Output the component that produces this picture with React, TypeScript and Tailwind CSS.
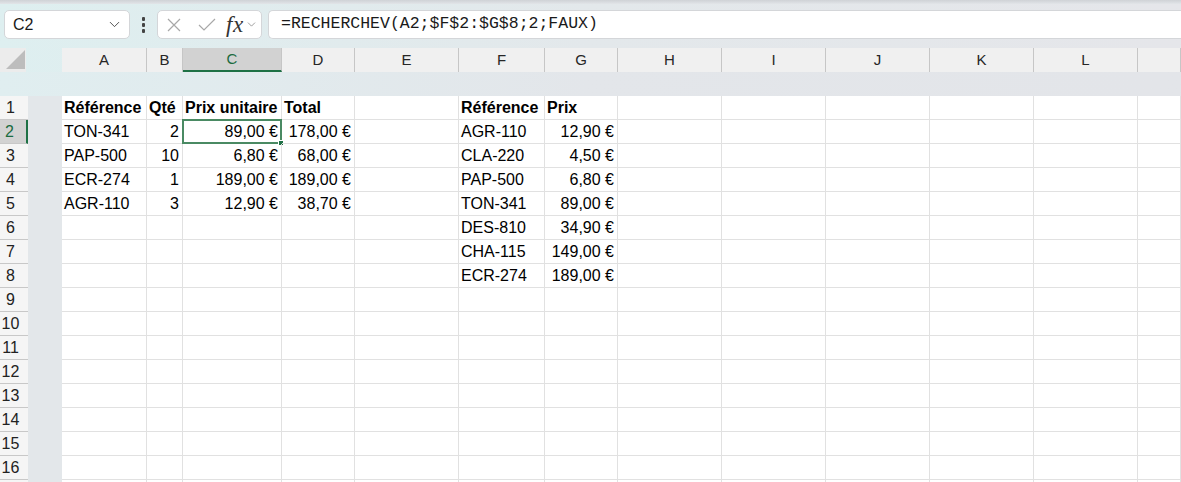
import { ChevronDown } from "lucide-react";

const cols = ["A", "B", "C", "D", "E", "F", "G", "H", "I", "J", "K", "L", ""];
const widths = [85, 36, 99, 73, 104, 86, 73, 104, 104, 104, 104, 104, 43];

type Cell = { t: string; b?: boolean; r?: boolean };

const e = (v: string): Cell => ({ t: `${v}\u00a0€`, r: true });
const n = (v: string): Cell => ({ t: v, r: true });
const s = (v: string): Cell => ({ t: v });
const h = (v: string): Cell => ({ t: v, b: true });

const data: Record<number, Record<number, Cell>> = {
    1: { 0: h("Référence"), 1: h("Qté"), 2: h("Prix unitaire"), 3: h("Total"), 5: h("Référence"), 6: h("Prix") },
    2: { 0: s("TON-341"), 1: n("2"), 2: e("89,00"), 3: e("178,00"), 5: s("AGR-110"), 6: e("12,90") },
    3: { 0: s("PAP-500"), 1: n("10"), 2: e("6,80"), 3: e("68,00"), 5: s("CLA-220"), 6: e("4,50") },
    4: { 0: s("ECR-274"), 1: n("1"), 2: e("189,00"), 3: e("189,00"), 5: s("PAP-500"), 6: e("6,80") },
    5: { 0: s("AGR-110"), 1: n("3"), 2: e("12,90"), 3: e("38,70"), 5: s("TON-341"), 6: e("89,00") },
    6: { 5: s("DES-810"), 6: e("34,90") },
    7: { 5: s("CHA-115"), 6: e("149,00") },
    8: { 5: s("ECR-274"), 6: e("189,00") },
};

const rows = Array.from({ length: 17 }, (_, i) => i + 1);

export default function App() {
    return (
        <div className="w-[1181px] h-[482px] overflow-hidden bg-gradient-to-r from-[#deeff0] via-[#e3e8eb] to-[#e5e6ea] font-['Liberation_Sans',Arial,sans-serif] text-black">
            <div className="h-[4px] bg-gradient-to-b from-[#cfd2d6] to-[#e2e5e8]" />

            {/* formula bar */}
            <div className="flex items-center mt-[6px] h-[29px]">
                <div className="ml-[4px] w-[126px] h-[29px] bg-white border border-[#d4d6d9] rounded-[5px] flex items-center justify-between pl-[8px] pr-[6px]">
                    <span className="text-[16px] text-[#1a1a1a]">C2</span>
                    <ChevronDown size={17} strokeWidth={1.3} className="text-[#444]" />
                </div>
                <div className="w-[27px] flex flex-col items-center gap-[2px]">
                    <span className="w-[3px] h-[4px] rounded-[1px] bg-[#444]" />
                    <span className="w-[3px] h-[4px] rounded-[1px] bg-[#444]" />
                    <span className="w-[3px] h-[4px] rounded-[1px] bg-[#444]" />
                </div>
                <div className="w-[105px] h-[29px] bg-white border border-[#d4d6d9] rounded-[5px] flex items-center pl-[8px]">
                    <svg width="16" height="16" viewBox="0 0 16 16" className="mr-[16px]">
                        <path d="M2 2 L14 14 M14 2 L2 14" stroke="#a8a8a8" strokeWidth="1.2" fill="none" />
                    </svg>
                    <svg width="18" height="14" viewBox="0 0 18 14" className="mr-[10px]">
                        <path d="M1 7 L6 12 L17 1" stroke="#a8a8a8" strokeWidth="1.2" fill="none" />
                    </svg>
                    <span className="font-['Liberation_Serif',serif] italic text-[23px] leading-none text-[#333] mr-[1px] tracking-[0.5px]">
                        fx
                    </span>
                    <ChevronDown size={13} strokeWidth={1.3} className="text-[#777]" />
                </div>
                <div className="ml-[6px] flex-1 h-[29px] bg-white border border-[#d4d6d9] rounded-l-[5px] border-r-0 flex items-center pl-[12px]">
                    <span className="font-['Liberation_Mono',monospace] text-[16.5px] text-[#1a1a1a]">
                        =RECHERCHEV(A2;$F$2:$G$8;2;FAUX)
                    </span>
                </div>
            </div>

            {/* column headers */}
            <div className="flex mt-[9px] h-[24px]">
                <div className="w-[26px] h-[24px] bg-[#ececec] flex items-end justify-end pr-[1px] pb-[3px]">
                    <div className="w-0 h-0 border-l-[19px] border-l-transparent border-b-[19px] border-b-[#bdbdbd]" />
                </div>
                <div className="w-[36px]" />
                {cols.map((c, i) => (
                    <div
                        key={i}
                        style={{ width: widths[i] }}
                        className={`h-[24px] shrink-0 flex items-center justify-center text-[15px] border-r border-[#c6c6c6] ${
                            c === "C" ? "bg-[#d2d2d2] text-[#1b6b3f] border-b-2 border-b-[#1e7145]" : "bg-[#f0f0f0] text-[#262626]"
                        }`}
                    >
                        {c}
                    </div>
                ))}
            </div>

            <div className="h-[24px] bg-gradient-to-r from-[#e0eef0] via-[#e3e6ea] to-[#e3e5e9]" />

            {/* rows */}
            <div className="flex">
                <div className="w-[28px] flex flex-col">
                    {rows.map((r) => (
                        <div
                            key={r}
                            className={`h-[24px] shrink-0 border-b border-[#c8c8c8] text-[16px] pr-[7px] flex items-center justify-center ${
                                r === 2 ? "bg-[#d2d2d2] text-[#1b6b3f] border-r-2 border-r-[#1e7145]" : "bg-[#f5f5f5] text-[#222]"
                            }`}
                        >
                            {r < 17 ? r : ""}
                        </div>
                    ))}
                </div>
                <div className="w-[34px] bg-[#e3e7ea]" />
                <div className="flex-1 bg-white">
                    {rows.map((r) => (
                        <div key={r} className="flex h-[24px]">
                            {widths.map((w, i) => {
                                const cell = data[r]?.[i];
                                const sel = r === 2 && i === 2;
                                return (
                                    <div
                                        key={i}
                                        style={{ width: w }}
                                        className={`relative shrink-0 h-[24px] border-r border-b border-[#e1e1e1] flex items-center text-[16px] whitespace-nowrap ${
                                            cell?.r ? "justify-end pr-[3px]" : "pl-[2px]"
                                        } ${cell?.b ? "font-bold" : ""}`}
                                    >
                                        {cell?.t}
                                        {sel && (
                                            <div className="absolute -left-[1px] -top-[1px] -right-[1px] -bottom-[1px] border-2 border-[#4a8a63]">
                                                <div className="absolute -right-[4px] -bottom-[4px] w-[6px] h-[6px] bg-[#1e7145] border border-white" />
                                            </div>
                                        )}
                                    </div>
                                );
                            })}
                        </div>
                    ))}
                </div>
            </div>
        </div>
    );
}
